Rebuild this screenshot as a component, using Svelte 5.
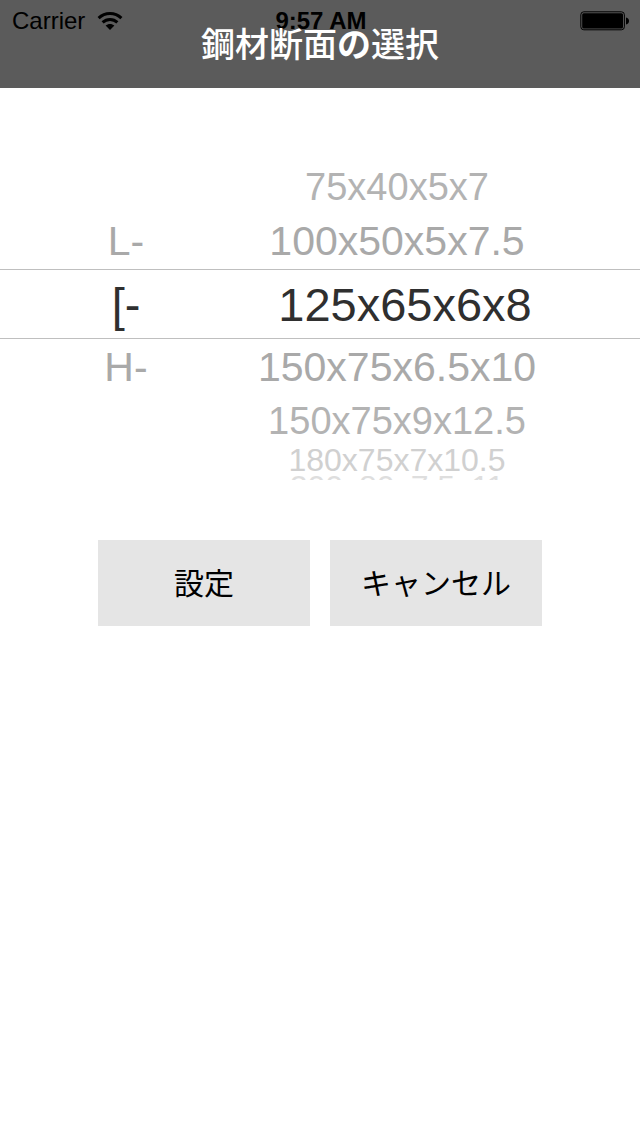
<script>
  const OFFSETS = [-4, -3, -2, -1, 0, 1, 2, 3, 4];

  const initial = { shape: 1, size: 2 };

  const wheels = [
    { id: 'shape', label: '形状', options: ['L-', '[-', 'H-'] },
    {
      id: 'size',
      label: '寸法',
      options: [
        '75x40x5x7',
        '100x50x5x7.5',
        '125x65x6x8',
        '150x75x6.5x10',
        '150x75x9x12.5',
        '180x75x7x10.5',
        '200x80x7.5x11',
        '200x90x8x13.5'
      ]
    }
  ];

  let selected = $state({ ...initial });

  // slots around the selected row, blank ones keep the wheel's shape
  function slots(wheel) {
    return OFFSETS.map(offset => {
      const index = selected[wheel.id] + offset;
      return { index, level: Math.abs(offset), text: wheel.options[index] };
    });
  }

  function reset() {
    selected = { ...initial };
  }
</script>

<header class="navbar">
  <div class="status">
    <div class="network">
      <span>Carrier</span>
      <svg class="wifi" viewBox="0 0 26 20" aria-hidden="true">
        <path d="M1.6 7.2C8 1 18 1 24.4 7.2" />
        <path d="M5.6 11.4c4.2-4 10.6-4 14.8 0" />
        <path class="dot" d="M8.6 14.6c2.5-2.2 6.3-2.2 8.8 0L13 19z" />
      </svg>
    </div>
    <span class="time">9:57 AM</span>
    <svg class="battery" viewBox="0 0 50 20" aria-hidden="true">
      <rect class="case" x="0.8" y="0.8" width="43.6" height="18" rx="3" />
      <rect x="2.2" y="2.2" width="40.8" height="15.2" rx="1.5" />
      <path d="M46 6.5c4 0.4 4 6.6 0 7z" />
    </svg>
  </div>
  <h1>鋼材断面<b>の</b>選択</h1>
</header>

<main>
  <form onsubmit={e => e.preventDefault()}>
    <div class="picker">
      {#each wheels as wheel}
        <fieldset class="wheel {wheel.id}">
          <legend class="hidden">{wheel.label}</legend>
          {#each slots(wheel) as slot (slot.index)}
            {#if slot.text}
              <label class="slot level-{slot.level}">
                <input
                  class="hidden"
                  type="radio"
                  name={wheel.id}
                  value={slot.index}
                  bind:group={selected[wheel.id]}
                />
                <span>{slot.text}</span>
              </label>
            {:else}
              <div class="slot level-{slot.level}"></div>
            {/if}
          {/each}
        </fieldset>
      {/each}
    </div>

    <div class="actions">
      <button type="submit">設定</button>
      <button type="button" onclick={reset}>キャンセル</button>
    </div>
  </form>
</main>

<style>
  :global(body) {
    background: #fff;
    font-family: "Liberation Sans", "Noto Sans CJK JP", sans-serif;
  }

  .navbar {
    position: relative;
    box-sizing: border-box;
    display: flex;
    align-items: center;
    justify-content: center;
    height: 88px;
    padding-top: 2px;
    background: #5b5b5b;
  }

  h1 {
    position: relative;
    margin: 0;
    color: #fff;
    font-size: 34px;
    line-height: 48px;
    font-weight: 500;
  }

  .status {
    position: absolute;
    inset: 0 0 auto;
    display: grid;
    grid-template-columns: 1fr auto 1fr;
    align-items: center;
    height: 42px;
    padding: 0 10px 0 12px;
    font-size: 24px;
    color: #000;
  }

  .network {
    display: flex;
    align-items: center;
    gap: 12px;
  }

  .wifi {
    width: 26px;
    height: 20px;
    fill: none;
    stroke: #000;
    stroke-width: 3;
  }

  .wifi .dot {
    fill: #000;
    stroke: none;
  }

  .time {
    font-weight: bold;
  }

  .battery {
    justify-self: end;
    width: 50px;
    height: 20px;
  }

  .battery .case {
    fill: none;
    stroke: #000;
    stroke-width: 1;
  }

  .picker {
    position: relative;
    display: grid;
    grid-template-columns: 252fr 290fr;
    margin-top: 40px;
    padding-right: 98px;
  }

  /* selection band */
  .picker::after {
    content: '';
    position: absolute;
    inset: 0;
    height: 68px;
    margin: auto 0;
    border-top: 1px solid #bfbfbf;
    border-bottom: 1px solid #bfbfbf;
    pointer-events: none;
  }

  .wheel {
    display: flex;
    flex-direction: column;
    min-width: 0;
    margin: 0;
    padding: 0;
    border: 0;
  }

  .slot {
    display: flex;
    align-items: center;
    justify-content: center;
    white-space: nowrap;
    color: #a9a9a9;
    cursor: pointer;
  }

  .level-0 {
    height: 70px;
    font-size: 47px;
    color: #2f2f2f;
  }

  .size .level-0 {
    padding-left: 16px;
  }

  .level-1 {
    height: 56px;
    font-size: 41px;
  }

  .level-2 {
    height: 52px;
    font-size: 38px;
    color: #b3b3b3;
  }

  .level-3 {
    height: 26px;
    font-size: 32px;
    line-height: 26px;
    color: #d0d0d0;
  }

  /* the wheel's rim, only the edge of the text shows */
  .level-4 {
    align-items: flex-start;
    height: 7px;
    overflow: hidden;
    font-size: 32px;
    line-height: 28px;
    color: #dedede;
  }

  .hidden {
    position: absolute;
    width: 1px;
    height: 1px;
    margin: 0;
    overflow: hidden;
    opacity: 0;
  }

  .actions {
    display: grid;
    grid-template-columns: 1fr 1fr;
    gap: 20px;
    padding: 60px 98px;
  }

  button {
    height: 86px;
    padding: 0 0 4px;
    border: 0;
    background: #e5e5e5;
    color: #000;
    font-family: "Noto Sans CJK JP", sans-serif;
    font-size: 30px;
    cursor: pointer;
  }
</style>
